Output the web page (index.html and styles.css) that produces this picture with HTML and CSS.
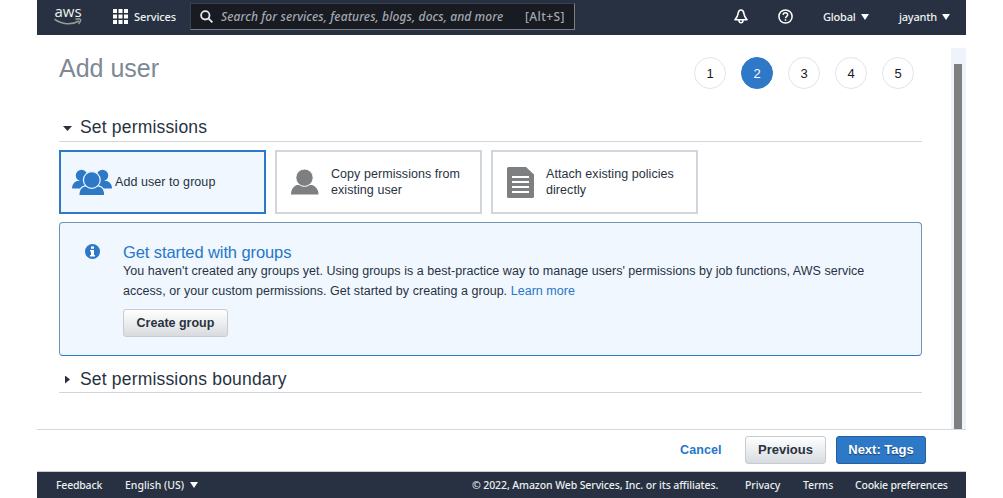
FILE: index.html
```html
<!DOCTYPE html>
<html lang="en">
<head>
<meta charset="utf-8">
<title>Add user</title>
<link rel="stylesheet" href="styles.css">
</head>
<body>
<div class="app">
  <header class="topbar">
    <div class="logo">
      <span class="logo-text">aws</span>
      <svg class="logo-smile" width="28" height="8" viewBox="0 0 28 8"><path d="M.5 1.2C8 6.8 18 7 25 3M21.500 1.500c2-.8 4-.8 5 0 .3 1-.6 3-2 4.500" fill="none" stroke="#9a9a98" stroke-width="1.500"/></svg>
    </div>
    <svg class="grid-icon" width="15" height="15" viewBox="0 0 15 15" fill="#fff"><path d="M0 0h4v4H0zM5.500 0h4v4h-4zM11 0h4v4h-4zM0 5.500h4v4H0zM5.500 5.500h4v4h-4zM11 5.500h4v4h-4zM0 11h4v4H0zM5.500 11h4v4h-4zM11 11h4v4h-4z"/></svg>
    <span class="services">Services</span>
    <div class="search">
      <svg class="search-icon" width="13" height="13" viewBox="0 0 13 13" fill="none" stroke="#e8eaed" stroke-width="1.800"><circle cx="5.300" cy="5.300" r="4.200"/><path d="M8.400 8.400l4 4"/></svg>
      <span class="placeholder">Search for services, features, blogs, docs, and more</span>
      <span class="shortcut">[Alt+S]</span>
    </div>
    <svg class="bell" width="14" height="15" viewBox="0 0 14 15" fill="none" stroke="#fff" stroke-width="1.600" stroke-linejoin="round"><path d="M7 1C5 1 4.300 2.800 4 4.800 3.600 7.700 2.500 8.800 1 10.800h12c-1.500-2-2.600-3.100-3-6C9.700 2.800 9 1 7 1zM5 11.500c.2 3 3.800 3 4 0"/></svg>
    <svg class="help" width="15" height="15" viewBox="0 0 15 15" fill="none" stroke="#fff" stroke-width="1.500"><circle cx="7.500" cy="7.500" r="6.600"/><path d="M5.200 5.900c.1-2.900 4.700-2.700 4.500 0C9.600 7.400 7.500 7.300 7.500 9.200M7.500 10.300v1.500"/></svg>
    <span class="global">Global</span><i class="caret"></i>
    <span class="account">jayanth</span><i class="caret"></i>
  </header>

  <div class="body">
    <main class="content">
      <div class="title-row">
        <h1>Add user</h1>
        <ol class="steps"><li>1</li><li class="current">2</li><li>3</li><li>4</li><li>5</li></ol>
      </div>
      <h2 class="section"><i class="tri down"></i><span>Set permissions</span></h2>
      <div class="cards">
        <div class="card selected">
          <svg class="group-icon" width="40" height="27" viewBox="0 0 40 27" fill="#2e78c8">
            <circle cx="9.500" cy="6.500" r="5.700"/><circle cx="30.500" cy="6.500" r="5.700"/>
            <path d="M0 19.500c0-4 2-6.500 5-7.500h9v7.500zM40 19.500c0-4-2-6.500-5-7.500h-9v7.500z"/>
            <path d="M6.800 26.500c0-6 2.500-9 6-9.700h14c3.500.7 6 3.700 6 9.700z" stroke="#f0f7ff" stroke-width="1.200"/>
            <circle cx="19.800" cy="11" r="8.400" stroke="#f0f7ff" stroke-width="1.200"/>
          </svg>
          <span>Add user to group</span>
        </div>
        <div class="card">
          <svg class="user-icon" width="28" height="26" viewBox="0 0 28 26" fill="#7e7f81"><path d="M0 25.500c0-5 2.500-8.500 6-9.500h15c3.500 1 6.500 4.500 6.500 9.500z"/><circle cx="13.500" cy="8.700" r="8.700" stroke="#fff"/></svg>
          <span>Copy permissions from<br>existing user</span>
        </div>
        <div class="card">
          <svg class="doc-icon" width="27" height="31" viewBox="0 0 27 31"><path d="M1.500 0H19l8 7.500V29.500q0 1.500-1.500 1.500h-24Q0 31 0 29.500v-28Q0 0 1.500 0z" fill="#7e7f81"/><path d="M5 10h17M5 15h17M5 20h17M5 25h17" stroke="#fff" stroke-width="2"/></svg>
          <span>Attach existing policies<br>directly</span>
        </div>
      </div>
      <section class="notice">
        <svg class="info" width="15" height="15" viewBox="0 0 15 15"><circle cx="7.500" cy="7.500" r="7.500" fill="#2e78c8"/><path d="M6 2.500h3v2.200H6zM5 6h4v5h1v1.500H5V11h1V7.500H5z" fill="#fff"/></svg>
        <div class="notice-copy">
          <h3>Get started with groups</h3>
          <p><span class="line-one">You haven't created any groups yet. Using groups is a best-practice way to manage users' permissions by job functions, AWS service</span><br><span class="line-two">access, or your custom permissions. Get started by creating a group. <a>Learn more</a></span></p>
          <button class="btn create">Create group</button>
        </div>
      </section>
      <h2 class="section boundary"><i class="tri right"></i><span>Set permissions boundary</span></h2>
    </main>
    <div class="scroll"><div class="thumb"></div></div>
  </div>

  <div class="actions">
    <a class="cancel">Cancel</a>
    <button class="btn previous">Previous</button>
    <button class="btn next">Next: Tags</button>
  </div>
  <footer class="footer">
    <span class="feedback">Feedback</span>
    <span class="language">English (US)</span><i class="caret"></i>
    <span class="copyright">© 2022, Amazon Web Services, Inc. or its affiliates.</span>
    <span class="privacy">Privacy</span>
    <span class="terms">Terms</span>
    <span class="cookies">Cookie preferences</span>
  </footer>
</div>
</body>
</html>
```

FILE: styles.css
```css
* { box-sizing: border-box; }
body { margin: 0; background: #fff; color: #28323f; font-family: "Liberation Sans", Arial, sans-serif; }
h1, h2, h3, p, ol { margin: 0; padding: 0; font-weight: 400; }
svg { display: block; flex: none; }
span { white-space: nowrap; }
.app { width: 929px; height: 498px; margin-left: 37px; display: flex; flex-direction: column; overflow: hidden; }

.topbar { height: 35px; flex: none; display: flex; align-items: flex-start; background: #273141; color: #f0f1f2; font: 500 11px/16px "Noto Sans", sans-serif; }
.logo { width: 28px; margin: 4px 0 0 17px; display: flex; flex-direction: column; align-items: center; }
.logo-text { height: 14px; font: 500 15px/14px "Open Sans", sans-serif; }
.grid-icon { margin: 9px 0 0 31px; }
.services { width: 41px; margin: 9px 0 0 6px; letter-spacing: -.1px; }
.search { width: 385px; height: 27px; margin: 3px 0 0 15px; display: flex; align-items: center; background: #181b22; border: 1px solid #7e7f81; border-top-color: #39414e; border-left-color: #39414e; }
.search-icon { margin: 0 8px 0 9px; }
.placeholder { width: 283px; color: #a3a9af; font-size: 12px; font-style: italic; letter-spacing: .1px; }
.shortcut { margin-left: 21px; color: #a3a9af; font-size: 12px; letter-spacing: .4px; }
.bell { margin: 9px 0 0 159px; }
.help { margin: 9px 0 0 30px; }
.global { width: 33px; margin: 9px 5px 0 30px; letter-spacing: -.2px; }
.account { width: 37px; margin: 9px 6px 0 30px; letter-spacing: -.2px; }
.caret { flex: none; width: 8px; height: 6px; background: #fff; clip-path: polygon(0 0, 100% 0, 50% 100%); }
.topbar .caret { margin-top: 14px; }

.body { height: 394px; flex: none; display: flex; justify-content: space-between; }
.content { width: 863px; margin-left: 22px; }
.title-row { height: 74px; padding: 17px 8px 0 0; display: flex; justify-content: space-between; align-items: flex-start; }
h1 { font-size: 25px; line-height: 32px; color: #7d8994; }
.steps { display: flex; gap: 15px; margin-top: 5px; list-style: none; }
.steps li { width: 32px; height: 32px; border: 1px solid #dce6ef; border-radius: 50%; color: #16191f; font: 13px/31px "Liberation Sans", Arial, sans-serif; text-align: center; }
.steps .current { background: #2e78c8; border-color: #2e78c8; color: #fff; }
.section { height: 33px; display: flex; align-items: center; gap: 8px; padding: 3px 0 0 4px; border-bottom: 1px solid #d2d6db; font-size: 17.5px; letter-spacing: .18px; line-height: 26px; }
.tri { background: #28323f; }
.down { width: 9px; height: 5px; margin-top: 4px; clip-path: polygon(0 0, 100% 0, 50% 100%); }
.right { width: 5px; height: 8px; margin: 2px 2px 0 2px; clip-path: polygon(0 0, 100% 50%, 0 100%); }
.cards { display: flex; gap: 9px; margin-top: 8px; }
.card { width: 207px; height: 64px; display: flex; align-items: center; border: 2px solid #d0d6dc; font-size: 12.5px; line-height: 16px; letter-spacing: .06px; }
.selected { background: #f0f7ff; border-color: #2e78c8; }
.group-icon { margin: 0 3px 0 11px; }
.user-icon { margin: 0 12px 0 14px; }
.doc-icon { margin: 0 12px 0 14px; }
.notice { height: 134px; margin-top: 8px; padding: 20px 0 0 25px; display: flex; align-items: flex-start; background: #f0f7ff; border: 1px solid #6e94b8; border-bottom-color: #2e78c8; border-radius: 4px; }
.info { margin: 1px 23px 0 0; }
h3 { font-size: 16.5px; letter-spacing: -.1px; line-height: 19px; color: #2776c8; }
p { font-size: 12.5px; letter-spacing: .04px; line-height: 19.5px; }
a { color: #2776c8; }
.btn { height: 28px; padding: 0; font: bold 13px "Liberation Sans", Arial, sans-serif; color: #28323f; background: linear-gradient(#fff, #d8dbde); border: 1px solid #c5ccd3; border-radius: 3px; }
.create { width: 105px; display: block; margin-top: 8px; font-size: 12.5px; }
.boundary { height: 37px; padding-top: 9px; }

.scroll { width: 15px; height: 381px; margin-top: 13px; padding: 16px 0 0 3px; background: #eef4f9; }
.thumb { width: 8px; height: 365px; background: #7e7f81; }
.actions { height: 43px; flex: none; display: flex; align-items: center; padding-bottom: 2px; border-top: 1px solid #cfd9e2; border-bottom: 1px solid #c9cdd2; }
.cancel { width: 42px; margin-left: 643px; font-size: 12.5px; font-weight: bold; letter-spacing: .1px; }
.previous { width: 81px; margin-left: 23px; }
.next { width: 90px; margin-left: 10px; color: #fff; background: #2e78c8; border-color: #245f9e; text-shadow: 0 1px 1px #173f6b; }
.footer { height: 26px; flex: none; display: flex; align-items: center; background: #273141; color: #eceef0; font: 500 10.5px/14px "Noto Sans", sans-serif; letter-spacing: -.1px; padding-left: 19px; }
.feedback { width: 46px; letter-spacing: -.2px; }
.language { width: 60px; margin-left: 23px; letter-spacing: 0; }
.footer .caret { margin-left: 5px; }
.copyright { width: 247px; margin-left: 274px; }
.privacy { width: 36px; margin-left: 26px; }
.terms { width: 30px; margin-left: 22px; }
.cookies { margin-left: 22px; letter-spacing: -.22px; }
```
